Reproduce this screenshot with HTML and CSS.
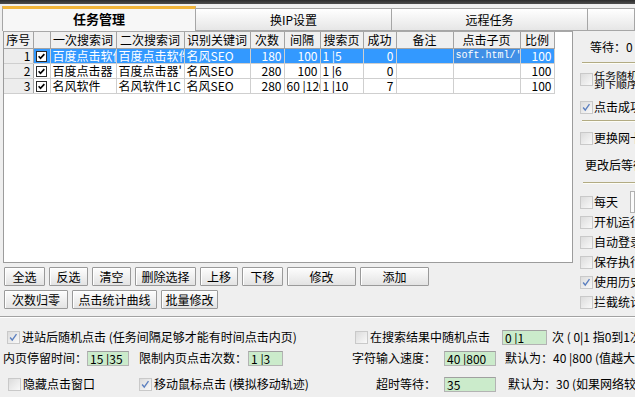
FILE: index.html
```html
<!DOCTYPE html>
<html lang="zh-CN">
<head>
<meta charset="utf-8">
<title>任务管理</title>
<link rel="stylesheet" href="styles.css">
</head>
<body>
<div class="topstrip"></div>
<div class="tabs">
  <div class="tab active">任务管理</div>
  <div class="tab">换IP设置</div>
  <div class="tab">远程任务</div>
  <div class="tab tail"></div>
</div>
<div class="upper">
  <div class="leftcol">
    <div class="listview">
      <table class="grid">
        <colgroup>
          <col style="width:29px"><col style="width:17px"><col style="width:66px"><col style="width:68px">
          <col style="width:66px"><col style="width:34px"><col style="width:36px"><col style="width:43px">
          <col style="width:33px"><col style="width:57px"><col style="width:67px"><col style="width:34px">
        </colgroup>
        <thead>
          <tr><th>序号</th><th></th><th>一次搜索词</th><th>二次搜索词</th><th>识别关键词</th><th>次数</th><th>间隔</th><th>搜索页</th><th>成功</th><th>备注</th><th>点击子页</th><th>比例</th></tr>
        </thead>
        <tbody>
          <tr class="sel">
            <td class="idx">1</td>
            <td class="chk"><span class="tcb"><svg viewBox="0 0 11 11" width="11" height="11"><path d="M2 5.2 L4.3 7.8 L9 2.6" stroke="#000" stroke-width="2" fill="none"/></svg></span></td>
            <td>百度点击软件</td><td>百度点击软件</td><td>名风SEO</td><td class="num">180</td><td class="num">100</td><td>1 |5</td><td class="num">0</td><td></td><td class="mono focus">soft.html/'</td><td class="num">100</td>
          </tr>
          <tr>
            <td class="idx">2</td>
            <td class="chk"><span class="tcb"><svg viewBox="0 0 11 11" width="11" height="11"><path d="M2 5.2 L4.3 7.8 L9 2.6" stroke="#000" stroke-width="2" fill="none"/></svg></span></td>
            <td>百度点击器</td><td>百度点击器'</td><td>名风SEO</td><td class="num">280</td><td class="num">100</td><td>1 |6</td><td class="num">0</td><td></td><td></td><td class="num">100</td>
          </tr>
          <tr>
            <td class="idx">3</td>
            <td class="chk"><span class="tcb"><svg viewBox="0 0 11 11" width="11" height="11"><path d="M2 5.2 L4.3 7.8 L9 2.6" stroke="#000" stroke-width="2" fill="none"/></svg></span></td>
            <td>名风软件</td><td>名风软件1C</td><td>名风SEO</td><td class="num">280</td><td class="num">60 |120</td><td>1 |10</td><td class="num">7</td><td></td><td></td><td class="num">100</td>
          </tr>
        </tbody>
      </table>
    </div>
    <div class="btnrow">
      <button class="btn w41">全选</button>
      <button class="btn w39">反选</button>
      <button class="btn w39">清空</button>
      <button class="btn w61">删除选择</button>
      <button class="btn w38">上移</button>
      <button class="btn w41">下移</button>
      <button class="btn w69">修改</button>
      <button class="btn w69">添加</button>
    </div>
    <div class="btnrow">
      <button class="btn w64">次数归零</button>
      <button class="btn w85">点击统计曲线</button>
      <button class="btn w57">批量修改</button>
    </div>
  </div>
  <div class="side">
    <div class="s-wait">等待：0</div>
    <div class="s-hr"></div>
    <div class="s-row s-two">
      <span class="cb"></span>
      <span class="two"><span class="ln">任务随机切换</span><span class="ln">到下顺序执行</span></span>
    </div>
    <div class="s-row s-click">
      <span class="cb"><svg viewBox="0 0 13 13" width="11" height="11"><path d="M2.5 6.5 L5 9.5 L10 2.5" stroke="#5b7fbf" stroke-width="1.6" fill="none"/></svg></span>
      <span>点击成功后</span>
    </div>
    <div class="s-hr"></div>
    <div class="s-row s-ip">
      <span class="cb"></span>
      <span>更换网卡</span>
    </div>
    <div class="s-text">更改后等待</div>
    <div class="s-hr s-hr2"></div>
    <div class="s-list">
      <div class="s-row r20">
        <span class="cb"></span><span>每天</span><span class="s-box"></span>
      </div>
      <div class="s-row r20"><span class="cb"></span><span>开机运行</span></div>
      <div class="s-row r20"><span class="cb"></span><span>自动登录</span></div>
      <div class="s-row r20"><span class="cb"></span><span>保存执行</span></div>
      <div class="s-row r20">
        <span class="cb"><svg viewBox="0 0 13 13" width="11" height="11"><path d="M2.5 6.5 L5 9.5 L10 2.5" stroke="#5b7fbf" stroke-width="1.6" fill="none"/></svg></span><span>使用历史</span>
      </div>
      <div class="s-row r20"><span class="cb"></span><span>拦截统计</span></div>
    </div>
  </div>
</div>
<div class="lower">
  <div class="lrow ra">
    <div class="l pa">
      <span class="cb"><svg viewBox="0 0 13 13" width="11" height="11"><path d="M2.5 6.5 L5 9.5 L10 2.5" stroke="#5b7fbf" stroke-width="1.6" fill="none"/></svg></span>
      <span class="lab">进站后随机点击 (任务间隔足够才能有时间点击内页)</span>
    </div>
    <div class="r pra">
      <span class="cb"></span>
      <span class="lab w120">在搜索结果中随机点击</span>
      <span class="inp w45 ml10">0 |1</span>
      <span class="ml5">次 ( 0|1 指0到1次 )</span>
    </div>
  </div>
  <div class="lrow rb">
    <div class="l pb">
      <span>内页停留时间：</span>
      <span class="inp w42">15 |35</span>
      <span class="ml10">限制内页点击次数：</span>
      <span class="inp w35 ml1">1 |3</span>
    </div>
    <div class="r">
      <span class="rlab">字符输入速度：</span>
      <span class="inp w52 ml8">40 |800</span>
      <span class="ml9">默认为：40 |800 (值越大越慢)</span>
    </div>
  </div>
  <div class="lrow rc">
    <div class="l pc">
      <span class="cb"></span>
      <span class="lab">隐藏点击窗口</span>
      <span class="cb ml44"><svg viewBox="0 0 13 13" width="11" height="11"><path d="M2.5 6.5 L5 9.5 L10 2.5" stroke="#5b7fbf" stroke-width="1.6" fill="none"/></svg></span>
      <span class="lab">移动鼠标点击 (模拟移动轨迹)</span>
    </div>
    <div class="r">
      <span class="rlab">超时等待：</span>
      <span class="inp w52 ml8">35</span>
      <span class="ml12">默认为：30 (如果网络较慢)</span>
    </div>
  </div>
</div>
</body>
</html>
```
FILE: styles.css
```css
* { box-sizing: border-box; }
html, body { margin: 0; padding: 0; }
body {
  width: 635px;
  height: 397px;
  overflow: hidden;
  background: #efefef;
  color: #000;
  font-family: "Noto Sans CJK SC", "Liberation Sans", sans-serif;
  font-size: 12px;
  line-height: 14px;
  white-space: nowrap;
}

.topstrip {
  height: 4px;
  background: linear-gradient(#2b2b2b, #4d4d4d);
}

.tabs {
  height: 27px;
  display: flex;
  align-items: flex-end;
}
.tab {
  width: 196px;
  height: 23px;
  flex: none;
  padding-top: 3px;
  text-align: center;
  line-height: 16px;
  background: linear-gradient(#ffffff, #e6e6e6);
  border: 1px solid #a6a6a6;
  border-left: none;
  font-size: 12px;
}
.tab.active {
  width: 194px;
  height: 25px;
  margin-left: 2px;
  padding-top: 2px;
  border: 1px solid #a6a6a6;
  border-top: 3px solid #f1b53b;
  border-bottom: none;
  background: #f7f7f7;
  font-weight: bold;
  font-size: 13px;
}
.tab.tail {
  flex: 1;
  width: auto;
}

.upper {
  display: flex;
  height: 285px;
}
.leftcol {
  width: 575px;
  flex: none;
}
.listview {
  margin-left: 3px;
  width: 570px;
  height: 232px;
  background: #fff;
  border: 1px solid #9c9c9c;
  border-top-color: #a8a8a8;
  overflow: hidden;
}
.grid {
  border-collapse: collapse;
  table-layout: fixed;
  width: 550px;
}
.grid th {
  height: 16px;
  padding: 0;
  font-weight: normal;
  text-align: center;
  background: #f0f0f0;
  border-right: 1px solid #a3a3a3;
  border-bottom: 1px solid #a3a3a3;
  overflow: hidden;
  line-height: 15px;
}
.grid td {
  height: 15px;
  padding: 0 2px;
  border-right: 1px solid #cfcfcf;
  border-bottom: 1px solid #cfcfcf;
  overflow: hidden;
  white-space: nowrap;
  line-height: 14px;
}
.grid td.idx {
  background: #ededed;
  text-align: right;
  border-right-color: #a3a3a3;
}
.grid td.num { text-align: right; }
.grid td.chk { text-align: center; padding: 0; }
.grid tr.sel td { background: #3399ff; color: #fff; }
.grid tr.sel td.idx { background: #ededed; color: #000; }
.grid tr.sel td.focus { background: #3f8fe6; }
.grid td.mono {
  font-family: "Liberation Mono", monospace;
  font-size: 10px;
  padding-left: 2px;
}
.tcb {
  display: inline-block;
  width: 11px;
  height: 11px;
  background: #fff;
  border: 1px solid #2a2a2a;
  vertical-align: middle;
  line-height: 0;
  margin-top: -2px;
}
.tcb svg { width: 9px; height: 9px; }

.btnrow {
  display: flex;
  gap: 4px;
  padding-left: 4px;
  margin-top: 4px;
}
.btn {
  height: 19px;
  padding: 0;
  margin: 0;
  font-family: inherit;
  font-size: 12px;
  line-height: 16px;
  color: #000;
  background: linear-gradient(#fdfdfd, #e3e3e3);
  border: 1px solid #9a9a9a;
  border-radius: 1px;
  box-shadow: inset 1px 1px 0 #fff;
}
.w38 { width: 38px; } .w39 { width: 39px; } .w41 { width: 41px; }
.w57 { width: 57px; } .w61 { width: 61px; } .w64 { width: 64px; }
.w69 { width: 69px; } .w85 { width: 85px; }

.side {
  width: 60px;
  flex: none;
  overflow: hidden;
}
.s-wait {
  height: 31px;
  line-height: 31px;
  padding-left: 15px;
}
.s-hr {
  margin-left: 7px;
  height: 2px;
  border-top: 1px solid #b2ab83;
  border-bottom: 1px solid #fdfdf6;
}
.s-hr2 { margin-top: 6px; margin-left: 8px; }
.s-row {
  display: flex;
  align-items: center;
  padding-left: 5px;
  gap: 1px;
}
.s-two { height: 30px; }
.s-two .two {
  display: flex;
  flex-direction: column;
  margin-top: 2px;
}
.s-two .ln {
  display: block;
  height: 9px;
  line-height: 9px;
  font-size: 11px;
  transform: scaleY(0.85);
}
.s-click { height: 26px; }
.s-ip { height: 32px; }
.s-text {
  height: 22px;
  line-height: 22px;
  padding-left: 10px;
}
.s-list { padding-top: 8px; }
.r20 { height: 20px; }
.s-box {
  display: inline-block;
  width: 20px;
  height: 22px;
  margin-left: 11px;
  border: 1px solid #b0b0b0;
  background: #fbfbfb;
}

.cb {
  display: inline-flex;
  align-items: center;
  justify-content: center;
  width: 13px;
  height: 13px;
  flex: none;
  border: 1px solid #c9c9c9;
  background: linear-gradient(135deg, #dcdcdc, #f9f9f9);
}

.lower {
  border-top: 1px solid #a2a2a2;
  box-shadow: inset 0 1px 0 #ffffff;
  padding-top: 9px;
}
.lrow {
  display: flex;
  align-items: center;
}
.ra { height: 22px; }
.rb { height: 20px; }
.rc { height: 22px; margin-top: 5px; }
.lrow .l {
  width: 350px;
  flex: none;
  display: flex;
  align-items: center;
}
.lrow .r {
  display: flex;
  align-items: center;
}
.pa { padding-left: 7px; }
.pb { padding-left: 3px; }
.pc { padding-left: 8px; }
.pra { padding-left: 5px; }
.lab { margin-left: 2px; }
.w120 { display: inline-block; width: 122px; }
.rlab {
  display: inline-block;
  width: 86px;
  text-align: right;
}
.inp {
  display: inline-block;
  height: 15px;
  line-height: 13px;
  padding: 0 2px;
  border: 1px solid #b3b3b3;
  border-top-color: #a0a0a0;
  background: #cbebcb;
  font-size: 12px;
  overflow: hidden;
}
.w35 { width: 35px; } .w42 { width: 42px; } .w45 { width: 45px; } .w52 { width: 52px; }
.ml1 { margin-left: 1px; }
.ml5 { margin-left: 5px; }
.ml8 { margin-left: 8px; }
.ml9 { margin-left: 9px; }
.ml10 { margin-left: 10px; }
.ml12 { margin-left: 12px; }
.ml44 { margin-left: 44px; }
```
